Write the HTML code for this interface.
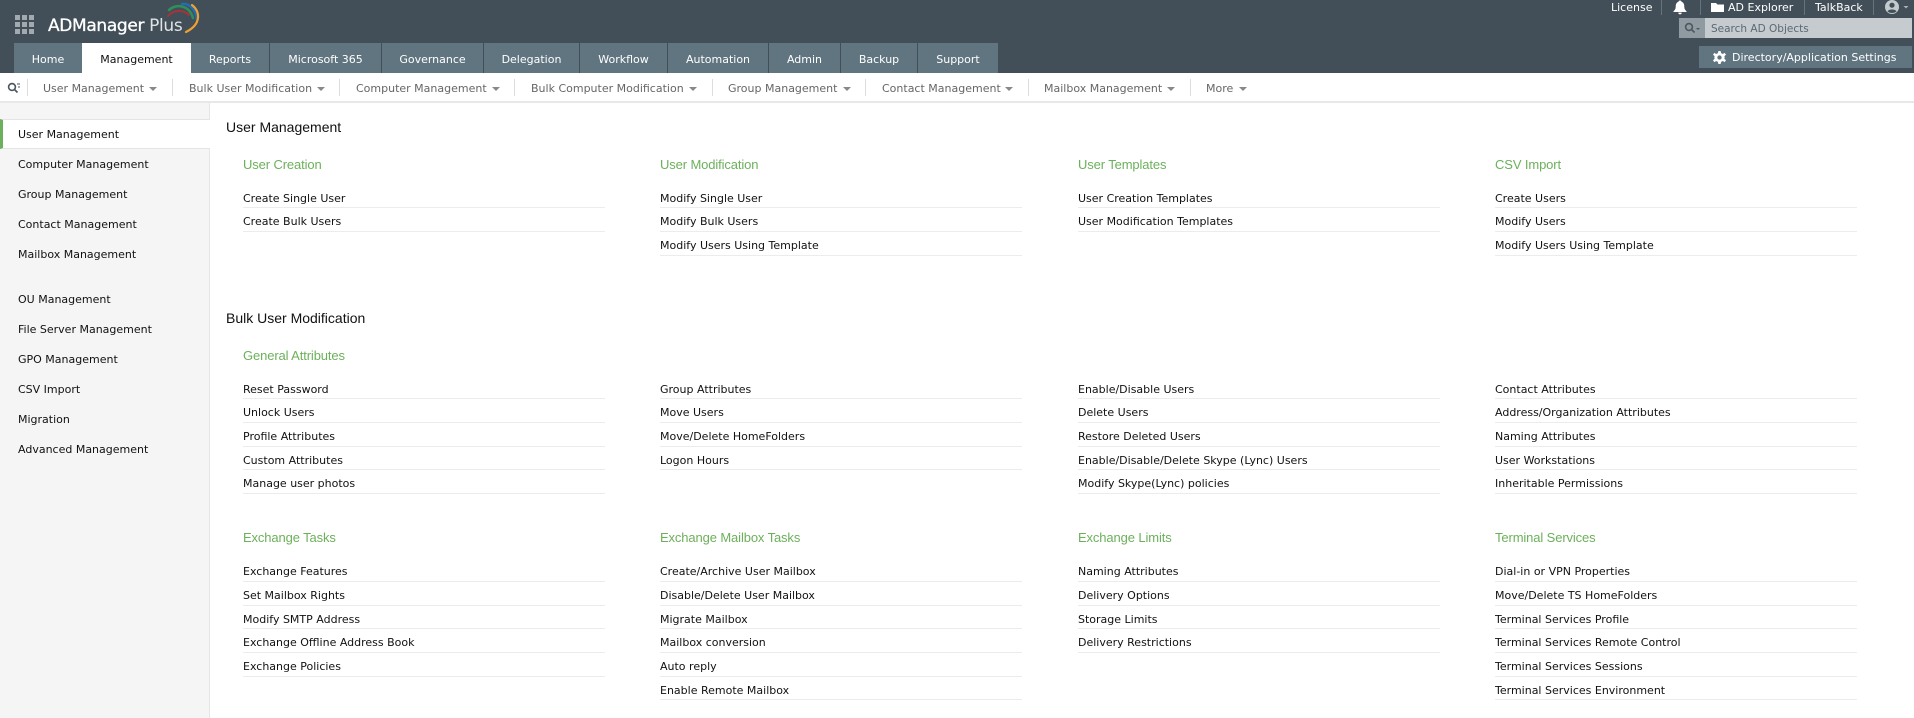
<!DOCTYPE html>
<html><head><meta charset="utf-8"><title>ADManager Plus</title>
<style>
html,body{margin:0;padding:0;background:#fff;}
body{width:1914px;height:718px;overflow:hidden;position:relative;font-family:"DejaVu Sans","Liberation Sans",sans-serif;font-size:11px;color:#111;}
div,span{box-sizing:border-box;}
.a{position:absolute;white-space:nowrap;}
#hd{position:absolute;left:0;top:0;width:1914px;height:73px;background:#424f58;}
.tab{position:absolute;top:43px;height:30px;background:#607580;color:#fff;text-align:center;line-height:33px;}
.tab.on{background:#fff;color:#111;}
.top{position:absolute;top:0;height:15px;line-height:16px;color:#fff;white-space:nowrap;}
.ts{position:absolute;top:0;width:1px;height:15px;background:#66747d;}
#sub{position:absolute;left:0;top:73px;width:1914px;height:30px;background:#fff;border-bottom:2px solid #e8e8e8;}
.si{position:absolute;top:0;line-height:32px;color:#666;white-space:nowrap;}
.ss{position:absolute;top:6px;width:1px;height:17px;background:#ddd;}
.ar{position:absolute;top:14px;width:0;height:0;border-left:4px solid transparent;border-right:4px solid transparent;border-top:4px solid #888;}
#side{position:absolute;left:0;top:103px;width:210px;height:615px;background:#f5f5f5;border-right:1px solid #e6e6e6;}
.sd{position:absolute;left:18px;height:30px;line-height:32px;white-space:nowrap;}
#act{position:absolute;left:0;top:119px;width:210px;height:30px;background:#fff;border-top:1px solid #e4e4e4;border-bottom:1px solid #e4e4e4;border-left:3px solid #6cb05b;}
.t{position:absolute;left:226px;font-family:"Liberation Sans",sans-serif;font-size:14px;line-height:18px;color:#111;white-space:nowrap;}
.g{position:absolute;font-family:"Liberation Sans",sans-serif;font-size:13px;line-height:20px;color:#6cb05b;white-space:nowrap;letter-spacing:-.12px;}
.c{position:absolute;width:362px;}
.c div{height:23.67px;line-height:28px;border-bottom:1px solid #ececec;white-space:nowrap;}
</style></head><body>
<div id="hd">
<svg class="a" style="left:15px;top:15px" width="19" height="19" fill="#a2aaaf"><rect width="5" height="5"/><rect x="7" width="5" height="5"/><rect x="14" width="5" height="5"/><rect y="7" width="5" height="5"/><rect x="7" y="7" width="5" height="5"/><rect x="14" y="7" width="5" height="5"/><rect y="14" width="5" height="5"/><rect x="7" y="14" width="5" height="5"/><rect x="14" y="14" width="5" height="5"/></svg>
<div class="a" style="left:48px;top:15px;font-family:'DejaVu Sans',sans-serif;font-size:17px;line-height:22px;color:#fff;letter-spacing:-.35px"><span style="-webkit-text-stroke:.3px #fff">ADManager</span> <span style="color:#dfe3e5">Plus</span></div>
<svg class="a" style="left:165px;top:0" width="40" height="36" fill="none" stroke-linecap="round">
<path d="M3 16C8 10 18 9 24 15" stroke="#a5343a" stroke-width="2"/>
<path d="M4 10C10 4 24 4 28 18" stroke="#2f8f5b" stroke-width="2.5"/>
<path d="M17 4C25 3 31 10 32 20" stroke="#1f6fb5" stroke-width="2.5"/>
<path d="M27 5C35 11 37 24 21 32" stroke="#f0a030" stroke-width="2.2"/>
</svg>
<div class="top" style="left:1611px">License</div><div class="ts" style="left:1661px"></div>
<svg class="a" style="left:1673px;top:0" width="14" height="15" fill="#fff"><path d="M7 0.5C8 .5 8.5 1 8.5 1.8C10.8 2.6 11.3 4.5 11.3 7C11.3 9 12.2 10 13.5 11.3V12H.5V11.3C1.8 10 2.7 9 2.7 7C2.7 4.5 3.2 2.6 5.5 1.8C5.5 1 6 .5 7 .5ZM5.3 12.6H8.7C8.7 13.8 8 14.4 7 14.4S5.3 13.8 5.3 12.6Z"/></svg>
<div class="ts" style="left:1700px"></div>
<svg class="a" style="left:1711px;top:2px" width="13" height="10" fill="#fff"><path d="M0 1H5L6.5 2.5H13V10H0Z"/></svg>
<div class="top" style="left:1728px">AD Explorer</div><div class="ts" style="left:1804px"></div>
<div class="top" style="left:1815px">TalkBack</div><div class="ts" style="left:1873px"></div>
<svg class="a" style="left:1885px;top:0" width="24" height="15"><circle cx="7" cy="7" r="7" fill="#c3cacd"/><circle cx="7" cy="5.2" r="2.6" fill="#424f58"/><path d="M2.5 11.5C3.5 8.8 10.5 8.8 11.5 11.5C9 13.5 5 13.5 2.5 11.5Z" fill="#424f58"/><path d="M18.5 6H23.5L21 8.5Z" fill="#aab2b7"/></svg>
<div class="a" style="left:1679px;top:18px;width:26px;height:20px;background:#8f9aa1"></div>
<svg class="a" style="left:1684px;top:22px" width="18" height="12" fill="none" stroke="#4c5860" stroke-width="1.6"><circle cx="5" cy="5" r="3.4"/><path d="M7.5 7.5L10.5 10.5"/><path d="M12 6H16L14 8Z" fill="#4c5860" stroke="none"/></svg>
<div class="a" style="left:1705px;top:18px;width:207px;height:20px;background:#c5cbcf;color:#5c6872;line-height:22px;padding-left:6px;font-size:10.5px">Search AD Objects</div>
<div class="a" style="left:1699px;top:46px;width:213px;height:22px;background:#607580;color:#fff;line-height:24px;padding-left:33px">Directory/Application Settings</div>
<svg class="a" style="left:1713px;top:51px" width="13" height="13" viewBox="0 0 24 24" fill="#fff"><path fill-rule="evenodd" d="M10 0H14L15 4L18 5.5L21.5 3.5L24 7L21 9.5L21.5 12L21 14.5L24 17L21.5 20.5L18 18.5L15 20L14 24H10L9 20L6 18.5L2.5 20.5L0 17L3 14.500L2.500 12L3 9.500L0 7L2.500 3.500L6 5.500L9 4ZM12 8A4 4 0 1 0 12 16A4 4 0 1 0 12 8Z"/></svg>
<div class="tab" style="left:14px;width:68px">Home</div>
<div class="tab on" style="left:82px;width:109px">Management</div>
<div class="tab" style="left:191px;width:78px">Reports</div>
<div class="tab" style="left:270px;width:111px">Microsoft 365</div>
<div class="tab" style="left:382px;width:101px">Governance</div>
<div class="tab" style="left:484px;width:95px">Delegation</div>
<div class="tab" style="left:580px;width:87px">Workflow</div>
<div class="tab" style="left:668px;width:100px">Automation</div>
<div class="tab" style="left:769px;width:71px">Admin</div>
<div class="tab" style="left:841px;width:76px">Backup</div>
<div class="tab" style="left:918px;width:80px">Support</div>
</div>
<div id="sub">
<svg class="a" style="left:7px;top:9px" width="14" height="12" fill="none" stroke="#4a555d" stroke-width="1.6"><circle cx="5" cy="5" r="3.4"/><path d="M7.500 7.500L10.500 10.500"/><path d="M10 2H13M11 5H13" stroke-width="1"/></svg>
<div class="ss" style="left:27px"></div>
<div class="si" style="left:43px">User Management</div><div class="ar" style="left:149px"></div><div class="ss" style="left:172px"></div>
<div class="si" style="left:189px">Bulk User Modification</div><div class="ar" style="left:317px"></div><div class="ss" style="left:339px"></div>
<div class="si" style="left:356px">Computer Management</div><div class="ar" style="left:492px"></div><div class="ss" style="left:514px"></div>
<div class="si" style="left:531px">Bulk Computer Modification</div><div class="ar" style="left:689px"></div><div class="ss" style="left:712px"></div>
<div class="si" style="left:728px">Group Management</div><div class="ar" style="left:843px"></div><div class="ss" style="left:865px"></div>
<div class="si" style="left:882px">Contact Management</div><div class="ar" style="left:1005px"></div><div class="ss" style="left:1028px"></div>
<div class="si" style="left:1044px">Mailbox Management</div><div class="ar" style="left:1167px"></div><div class="ss" style="left:1190px"></div>
<div class="si" style="left:1206px">More</div><div class="ar" style="left:1239px"></div>
</div>
<div id="side"></div>
<div id="act"></div>
<div class="sd" style="top:119px">User Management</div>
<div class="sd" style="top:149px">Computer Management</div>
<div class="sd" style="top:179px">Group Management</div>
<div class="sd" style="top:209px">Contact Management</div>
<div class="sd" style="top:239px">Mailbox Management</div>
<div class="sd" style="top:284px">OU Management</div>
<div class="sd" style="top:314px">File Server Management</div>
<div class="sd" style="top:344px">GPO Management</div>
<div class="sd" style="top:374px">CSV Import</div>
<div class="sd" style="top:404px">Migration</div>
<div class="sd" style="top:434px">Advanced Management</div>

<div class="t" style="top:118px">User Management</div>
<div class="g" style="left:243px;top:155px">User Creation</div>
<div class="g" style="left:660px;top:155px">User Modification</div>
<div class="g" style="left:1078px;top:155px">User Templates</div>
<div class="g" style="left:1495px;top:155px">CSV Import</div>
<div class="c" style="left:243px;top:184.6px"><div>Create Single User</div><div>Create Bulk Users</div></div>
<div class="c" style="left:660px;top:184.6px"><div>Modify Single User</div><div>Modify Bulk Users</div><div>Modify Users Using Template</div></div>
<div class="c" style="left:1078px;top:184.6px"><div>User Creation Templates</div><div>User Modification Templates</div></div>
<div class="c" style="left:1495px;top:184.6px"><div>Create Users</div><div>Modify Users</div><div>Modify Users Using Template</div></div>

<div class="t" style="top:309px">Bulk User Modification</div>
<div class="g" style="left:243px;top:346px">General Attributes</div>
<div class="c" style="left:243px;top:375.8px"><div>Reset Password</div><div>Unlock Users</div><div>Profile Attributes</div><div>Custom Attributes</div><div>Manage user photos</div></div>
<div class="c" style="left:660px;top:375.8px"><div>Group Attributes</div><div>Move Users</div><div>Move/Delete HomeFolders</div><div>Logon Hours</div></div>
<div class="c" style="left:1078px;top:375.8px"><div>Enable/Disable Users</div><div>Delete Users</div><div>Restore Deleted Users</div><div>Enable/Disable/Delete Skype (Lync) Users</div><div>Modify Skype(Lync) policies</div></div>
<div class="c" style="left:1495px;top:375.8px"><div>Contact Attributes</div><div>Address/Organization Attributes</div><div>Naming Attributes</div><div>User Workstations</div><div>Inheritable Permissions</div></div>

<div class="g" style="left:243px;top:528px">Exchange Tasks</div>
<div class="g" style="left:660px;top:528px">Exchange Mailbox Tasks</div>
<div class="g" style="left:1078px;top:528px">Exchange Limits</div>
<div class="g" style="left:1495px;top:528px">Terminal Services</div>
<div class="c" style="left:243px;top:558.4px"><div>Exchange Features</div><div>Set Mailbox Rights</div><div>Modify SMTP Address</div><div>Exchange Offline Address Book</div><div>Exchange Policies</div></div>
<div class="c" style="left:660px;top:558.4px"><div>Create/Archive User Mailbox</div><div>Disable/Delete User Mailbox</div><div>Migrate Mailbox</div><div>Mailbox conversion</div><div>Auto reply</div><div>Enable Remote Mailbox</div></div>
<div class="c" style="left:1078px;top:558.4px"><div>Naming Attributes</div><div>Delivery Options</div><div>Storage Limits</div><div>Delivery Restrictions</div></div>
<div class="c" style="left:1495px;top:558.4px"><div>Dial-in or VPN Properties</div><div>Move/Delete TS HomeFolders</div><div>Terminal Services Profile</div><div>Terminal Services Remote Control</div><div>Terminal Services Sessions</div><div>Terminal Services Environment</div></div>
</body></html>
